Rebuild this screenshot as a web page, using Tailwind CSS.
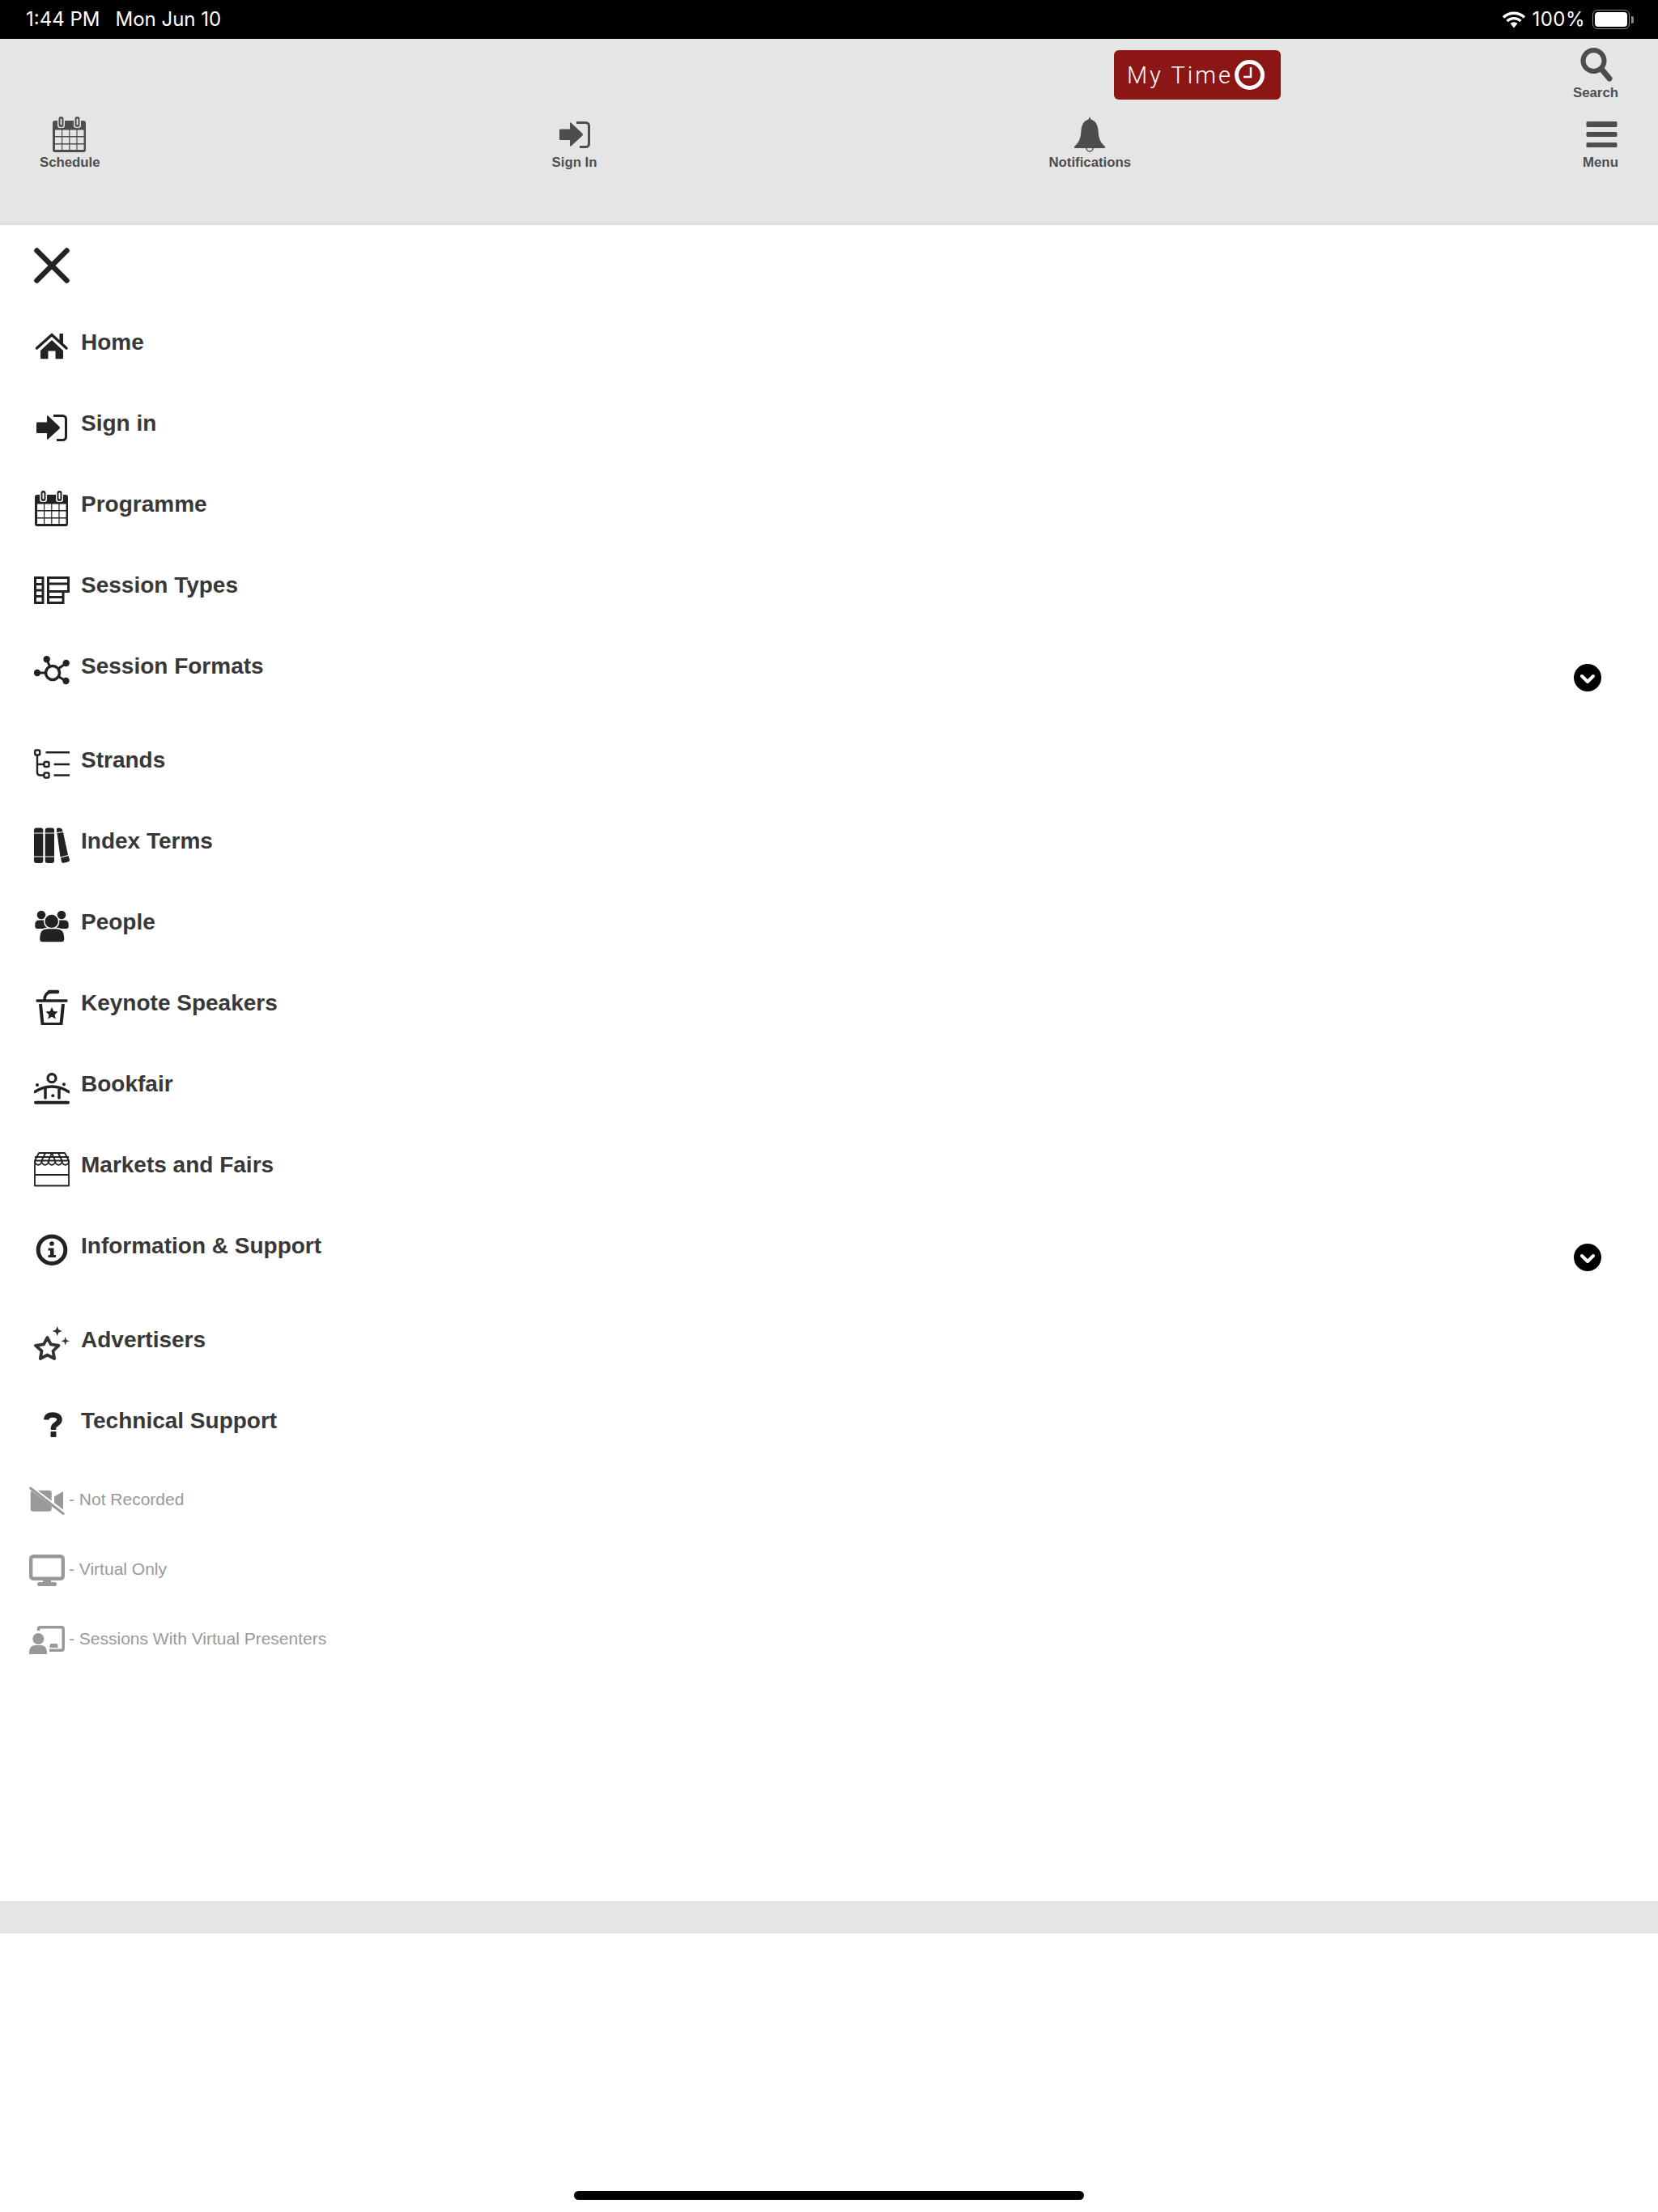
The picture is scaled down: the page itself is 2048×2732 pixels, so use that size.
<!DOCTYPE html>
<html lang="en">
<head>
  <meta charset="UTF-8" />
  <meta name="viewport" content="width=device-width, initial-scale=1" />
  <title>Menu</title>
  <script src="https://cdn.jsdelivr.net/npm/@tailwindcss/browser@4"></script>
</head>
<body class="bg-white font-['Liberation_Sans',Arial,sans-serif]">
  <svg class="hidden">
    <symbol id="i-calendar" viewBox="0 0 44 44">
      <path fill="currentColor" fill-rule="evenodd" d="M4 5h3v6q0 3 3 3h3q3 0 3-3V5h11v6q0 3 3 3h3q3 0 3-3V5h3a3 3 0 0 1 3 3v33a3 3 0 0 1-3 3H4a3 3 0 0 1-3-3V8a3 3 0 0 1 3-3zM4 16.500h8V24H4zM13.200 16.500h8V24h-8zM22.400 16.500h8V24h-8zM31.600 16.500H39.500V24H31.600zM4 25.500h8V33H4zM13.200 25.500h8V33h-8zM22.400 25.500h8V33h-8zM31.600 25.500H39.500V33H31.600zM4 34.500h8V41H4zM13.200 34.500h8V41h-8zM22.400 34.500h8V41h-8zM31.600 34.500H39.500V41H31.600z"/>
      <path fill="currentColor" fill-rule="evenodd" d="M8.500 3a3 3 0 0 1 6 0v7a3 3 0 0 1-6 0zM10.500 3.500v6a1 1 0 0 0 2 0v-6a1 1 0 0 0-2 0zM28.500 3a3 3 0 0 1 6 0v7a3 3 0 0 1-6 0zM30.500 3.500v6a1 1 0 0 0 2 0v-6a1 1 0 0 0-2 0z"/>
    </symbol>
    <symbol id="i-signin" viewBox="0 0 44 44">
      <path fill="currentColor" d="M4 15.500h12V8.300q0-1.500 1.300-.7L31.500 21q1 1.200 0 2.400L17.300 36.500q-1.300.8-1.300-.7V29H4q-1 0-1-1V16.500q0-1 1-1z"/>
      <path fill="none" stroke="currentColor" stroke-width="3" d="M24 7.500h11.500a4 4 0 0 1 4 4v22a4 4 0 0 1-4 4H28"/>
    </symbol>
  </svg>

  <div class="flex flex-col w-[2048px] h-[2732px]">
    <!-- status bar -->
    <div class="flex items-center justify-between h-[48px] bg-black text-white pl-[32px] pr-[30px] font-['Inter',sans-serif] text-[24px]">
      <div class="flex gap-[19px]">
        <span>1:44 PM</span>
        <span>Mon Jun 10</span>
      </div>
      <div class="flex items-center">
        <svg class="w-[30px] h-[22px]" viewBox="0 0 30 22">
          <path fill="none" stroke="white" stroke-width="3.400" d="M2 8.500C9 1.500 21 1.500 28 8.500M6.500 13c5-4.500 12-4.500 17 0"/>
          <path fill="white" d="M10.500 16c3-2.200 6-2.200 9 0L15 21.500z"/>
        </svg>
        <span class="ml-[7px] tracking-[0.500px]">100%</span>
        <div class="flex items-center ml-[9px]">
          <div class="flex items-center w-[46px] h-[24px] p-[2px] rounded-[6px] border border-[#8a8a8a]">
            <div class="w-full h-full bg-white rounded-[4px]"></div>
          </div>
          <div class="w-[3px] h-[9px] ml-[2px] rounded-r-[2px] bg-[#8a8a8a]"></div>
        </div>
      </div>
    </div>

    <!-- header -->
    <header class="h-[230px] bg-[#e5e5e5] border-b-2 border-[#dcdcdc] text-[#4d4d4d] text-[16.800px] leading-[20px] font-bold pl-[49px] pr-[49px]">
      <div class="flex justify-end items-start h-[96px] pt-[11px]">
        <div class="flex items-center w-[206px] h-[61px] mt-[3px] mr-[361px] pl-[16px] bg-[#8c1515] rounded-[6px] text-white font-['Roboto',sans-serif] font-light text-[29px] tracking-[3px]">
          <span>My Time</span>
          <svg class="w-[37px] h-[37px] ml-[2px]" viewBox="0 0 37 37">
            <circle cx="18.500" cy="18.500" r="16" fill="none" stroke="white" stroke-width="5"/>
            <path fill="none" stroke="white" stroke-width="2.500" d="M20 9v12h-9"/>
          </svg>
        </div>
        <div class="flex flex-col items-center gap-[2px]">
          <svg class="w-[44px] h-[44px]" viewBox="0 0 44 44">
            <circle cx="19.500" cy="16" r="13" fill="none" stroke="currentColor" stroke-width="6"/>
            <path stroke="currentColor" stroke-width="7" stroke-linecap="round" d="M29 26l10 12"/>
          </svg>
          <span>Search</span>
        </div>
      </div>
      <nav class="flex justify-between items-start">
        <div class="flex flex-col items-center gap-[3px]">
          <svg class="w-[44px] h-[44px]"><use href="#i-calendar"/></svg>
          <span>Schedule</span>
        </div>
        <div class="flex flex-col items-center gap-[3px]">
          <svg class="w-[44px] h-[44px]"><use href="#i-signin"/></svg>
          <span>Sign In</span>
        </div>
        <div class="flex flex-col items-center gap-[3px]">
          <svg class="w-[44px] h-[44px]" viewBox="0 0 44 44">
            <path fill="currentColor" d="M22 0l1.500 3.500C29 5 32 10 32.500 17c.5 8 1.500 14 8.500 20q1 1.500-1 2H4q-2-.5-1-2c7-6 8-12 8.500-20C12 10 15 5 20.500 3.500z"/>
            <path fill="none" stroke="currentColor" stroke-width="1.500" d="M18 39a4 4 0 0 0 8 0"/>
          </svg>
          <span>Notifications</span>
        </div>
        <div class="flex flex-col items-center gap-[3px]">
          <svg class="w-[44px] h-[44px]" viewBox="0 0 44 44">
            <path fill="currentColor" d="M6 6h35q1.500 0 1.500 1.500v4q0 1.500-1.500 1.500H6q-1.500 0-1.500-1.500v-4Q4.500 6 6 6zM6 19h35q1.500 0 1.500 1.500v3q0 1.500-1.500 1.500H6q-1.500 0-1.500-1.500v-3Q4.500 19 6 19zM6 32h35q1.500 0 1.500 1.500v3q0 1.500-1.500 1.500H6q-1.500 0-1.500-1.500v-3Q4.500 32 6 32z"/>
          </svg>
          <span>Menu</span>
        </div>
      </nav>
    </header>

    <!-- menu -->
    <main class="flex-1 pt-[28px] pl-[42px]">
      <svg class="w-[44px] h-[44px] mb-[56px] text-[#222222]" viewBox="0 0 44 44">
        <path stroke="currentColor" stroke-width="6.500" stroke-linecap="round" d="M3.500 3.500l37 37M40.500 3.500l-37 37"/>
      </svg>

      <ul class="text-[28px] leading-[34px] font-bold text-[#383838]">
        <li class="flex h-[100px] gap-[14px]">
          <svg class="w-[44px] h-[44px] text-[#222222]" viewBox="0 0 44 44">
            <path fill="currentColor" d="M8 27L22 14 36 27v9q0 1.300-1.300 1.300H26.500V27.500h-9v9.800H9.300Q8 37.300 8 36z"/>
            <path fill="none" stroke="currentColor" stroke-width="3.500" stroke-linecap="round" d="M3.500 24L22 7.500 40 24"/>
            <path fill="currentColor" d="M31.500 6h4.500v13l-4.500-4z"/>
          </svg>
          <span>Home</span>
        </li>
        <li class="flex h-[100px] gap-[14px]">
          <svg class="w-[44px] h-[44px] text-[#222222]"><use href="#i-signin"/></svg>
          <span>Sign in</span>
        </li>
        <li class="flex h-[100px] gap-[14px]">
          <svg class="w-[44px] h-[44px] text-[#222222]"><use href="#i-calendar"/></svg>
          <span>Programme</span>
        </li>
        <li class="flex h-[100px] gap-[14px]">
          <svg class="w-[44px] h-[44px] text-[#222222]" viewBox="0 0 44 44">
            <path fill="none" stroke="currentColor" stroke-width="3" d="M1.500 7.500h9.500v31H1.500zM1.500 15.500h9.500M1.500 23h9.500M1.500 30.500h9.500M17.500 38.500v-31h25v17h-6.500v14zM17.500 15h25M17.500 24.500h18.500M17.500 31.500h18.500"/>
          </svg>
          <span>Session Types</span>
        </li>
        <li class="flex h-[116px] gap-[14px]">
          <svg class="w-[44px] h-[44px] text-[#222222]" viewBox="0 0 44 44">
            <path stroke="currentColor" stroke-width="3" d="M15.700 8.300L23 25M39.700 13L23 25M4 25h19M39 35L23 25"/>
            <circle cx="23" cy="25" r="8.500" fill="white" stroke="currentColor" stroke-width="3.500"/>
            <circle cx="15.700" cy="8.300" r="4.200" fill="currentColor"/>
            <circle cx="39.700" cy="13" r="4.200" fill="currentColor"/>
            <circle cx="4" cy="25" r="4.200" fill="currentColor"/>
            <circle cx="39.500" cy="35" r="4.200" fill="currentColor"/>
          </svg>
          <span>Session Formats</span>
          <svg class="w-[34px] h-[34px] ml-auto mr-[70px] mt-[14px]" viewBox="0 0 34 34">
            <circle cx="17" cy="17" r="17" fill="black"/>
            <path fill="none" stroke="white" stroke-width="4" stroke-linecap="round" stroke-linejoin="round" d="M10 15l7 7 7-7"/>
          </svg>
        </li>
        <li class="flex h-[100px] gap-[14px]">
          <svg class="w-[44px] h-[44px] text-[#222222]" viewBox="0 0 44 44">
            <g fill="none" stroke="currentColor" stroke-width="2.400">
              <rect x="1.200" y="4.500" width="6" height="6" rx="1.500"/>
              <rect x="12.500" y="19" width="6" height="6" rx="1.500"/>
              <rect x="12.500" y="32.500" width="6" height="6" rx="1.500"/>
              <path d="M4 10.500V32q0 3.500 3.500 3.500h5M4 22h8.500M14.500 7.300H44M24.500 22H44M24.500 35.500H44"/>
            </g>
          </svg>
          <span>Strands</span>
        </li>
        <li class="flex h-[100px] gap-[14px]">
          <svg class="w-[44px] h-[44px] text-[#222222]" viewBox="0 0 44 44">
            <path fill="currentColor" d="M3 .500h5.300q3 0 3 3v3H0v-3q0-3 3-3zM0 7.500h11.300v28H0zM0 36.500h11.300V41q0 3-3 3H3q-3 0-3-3zM16.700.500H22q3 0 3 3v3H13.700v-3q0-3 3-3zM13.700 7.500H25v28H13.700zM13.700 36.500H25V41q0 3-3 3h-5.300q-3 0-3-3z"/>
            <path fill="currentColor" d="M28 2q0-2 3-1.500l2 .5q2 .5 2 2l.5 2-7.500 1zM28.500 7l7.500-1 6 28-9.500 2.500zM33 37.500l9.500-2.500 1.500 5q.3 2-2 2.500l-5 1.200q-2.500.5-3-1.500z"/>
          </svg>
          <span>Index Terms</span>
        </li>
        <li class="flex h-[100px] gap-[14px]">
          <svg class="w-[44px] h-[44px] text-[#222222]" viewBox="0 0 44 44">
            <circle cx="9" cy="8" r="5.300" fill="currentColor"/>
            <circle cx="34" cy="8" r="5.300" fill="currentColor"/>
            <path fill="currentColor" d="M1.300 20q0-5.500 5-5.500h5q4.700 0 4.700 5V25H4q-2.700 0-2.700-3zM27 14.500h10.700q5 0 5 5.500v2q0 3-2.700 3H27z"/>
            <circle cx="21.700" cy="16" r="9" fill="currentColor" stroke="white" stroke-width="1.500"/>
            <path fill="currentColor" stroke="white" stroke-width="1.500" d="M6.500 36q0-11.500 10-11.500h11q10.500 0 10.500 11.500v2q0 4-4 4H10.500q-4 0-4-4z"/>
          </svg>
          <span>People</span>
        </li>
        <li class="flex h-[100px] gap-[14px]">
          <svg class="w-[44px] h-[44px] text-[#222222]" viewBox="0 0 44 44">
            <path fill="none" stroke="currentColor" stroke-width="3.500" stroke-linecap="round" d="M4 14h36M13 13Q13 5 20 3"/>
            <path fill="none" stroke="currentColor" stroke-width="4.500" stroke-linecap="round" d="M19 3h10"/>
            <path fill="none" stroke="currentColor" stroke-width="4" stroke-linejoin="round" d="M8 18l2.500 25h23l2.500-25"/>
            <path fill="currentColor" d="M22 22l2.300 5 5.300.6-4 3.600 1.100 5.300-4.700-2.700-4.700 2.700 1.100-5.300-4-3.600 5.300-.6z"/>
          </svg>
          <span>Keynote Speakers</span>
        </li>
        <li class="flex h-[100px] gap-[14px]">
          <svg class="w-[44px] h-[44px] text-[#222222]" viewBox="0 0 44 44">
            <circle cx="22" cy="9.700" r="5" fill="none" stroke="currentColor" stroke-width="3.200"/>
            <path fill="none" stroke="currentColor" stroke-width="3.500" stroke-linecap="round" d="M1 26.500Q11 20 22 20t21 6.500M14 21v13M31 21v13"/>
            <path stroke="currentColor" stroke-width="4" stroke-linecap="round" d="M2 39.700h40"/>
            <circle cx="4" cy="18" r="2" fill="currentColor"/>
            <circle cx="37" cy="17.300" r="2" fill="currentColor"/>
            <circle cx="23.300" cy="31.300" r="2" fill="currentColor"/>
          </svg>
          <span>Bookfair</span>
        </li>
        <li class="flex h-[100px] gap-[14px]">
          <svg class="w-[44px] h-[44px] text-[#222222]" viewBox="0 0 44 44">
            <path fill="none" stroke="currentColor" stroke-width="1.800" stroke-linejoin="round" d="M6 2h32l5 9.500V42.500H1V11.500zM1 29h42M1 11.500h42M1 11.500c0 7 8.400 7 8.400 0 0 7 8.400 7 8.400 0 0 7 8.400 7 8.400 0 0 7 8.400 7 8.400 0 0 7 8.400 7 8.400 0M14 2l-4.600 9.500M22 2l-4.200 9.500M22 2l4.200 9.500M30 2l4.600 9.500M1 7h42"/>
          </svg>
          <span>Markets and Fairs</span>
        </li>
        <li class="flex h-[116px] gap-[14px]">
          <svg class="w-[44px] h-[44px] text-[#222222]" viewBox="0 0 44 44">
            <circle cx="22" cy="21.700" r="16.800" fill="none" stroke="currentColor" stroke-width="5"/>
            <circle cx="22" cy="14" r="2.800" fill="currentColor"/>
            <path fill="currentColor" d="M17.500 19.500H24.500V28h2.500v3H17.500v-3h2.500v-5.500h-2.500z"/>
          </svg>
          <span>Information &amp; Support</span>
          <svg class="w-[34px] h-[34px] ml-auto mr-[70px] mt-[14px]" viewBox="0 0 34 34">
            <circle cx="17" cy="17" r="17" fill="black"/>
            <path fill="none" stroke="white" stroke-width="4" stroke-linecap="round" stroke-linejoin="round" d="M10 15l7 7 7-7"/>
          </svg>
        </li>
        <li class="flex h-[100px] gap-[14px]">
          <svg class="w-[44px] h-[44px] text-[#333333]" viewBox="0 0 44 44">
            <path fill="none" stroke="currentColor" stroke-width="3.800" stroke-linejoin="round" d="M16.500 14l4.300 8.400 9.700 1.400-7 6.700 1.700 9.500-8.700-4.500L7.800 40l1.700-9.500-7.500-6.700 10-1.400z"/>
            <path fill="currentColor" d="M28.700 0l1.700 4.300 4.300 1.700-4.300 1.700-1.700 4.300L27 7.700 22.700 6 27 4.300zM38.700 13l1.300 4 4 1.300-4 1.300-1.300 4-1.300-4-4-1.300 4-1.300z"/>
          </svg>
          <span>Advertisers</span>
        </li>
        <li class="flex h-[92px] gap-[14px]">
          <svg class="w-[44px] h-[44px] text-[#222222]" viewBox="0 0 44 44">
            <path fill="none" stroke="currentColor" stroke-width="6.500" d="M15 15.500C15.500 11 18.500 9.500 23 9.500c5 0 8.500 2 8.500 6 0 5-7.500 5.500-7.500 10V28"/>
            <rect x="20.500" y="30" width="7" height="7" rx="1" fill="currentColor"/>
          </svg>
          <span>Technical Support</span>
        </li>
      </ul>

      <!-- legend -->
      <ul class="-ml-[6px] text-[21px] leading-[44px] text-[#999999]">
        <li class="flex h-[86px] gap-[5px]">
          <svg class="w-[44px] h-[44px]" viewBox="0 0 44 44">
            <path fill="currentColor" d="M4.700 10.700h20q3 0 3 3v20q0 3-3 3h-20q-3 0-3-3v-20q0-3 3-3zM31 18.500l11-6.500v25l-11-7z"/>
            <path stroke="white" stroke-width="5" d="M-1 5l46 35"/>
            <path stroke="currentColor" stroke-width="3" stroke-linecap="round" d="M1.700 8l40.500 31.500"/>
          </svg>
          <span>- Not Recorded</span>
        </li>
        <li class="flex h-[86px] gap-[5px]">
          <svg class="w-[44px] h-[44px]" viewBox="0 0 44 44">
            <rect x="2.200" y="6.200" width="39.600" height="27.500" rx="3" fill="none" stroke="currentColor" stroke-width="4.400"/>
            <path fill="currentColor" d="M17 35h10v3h-10zM12 38h20q2 0 2 2.500T32 43H12q-2 0-2-2.500T12 38z"/>
          </svg>
          <span>- Virtual Only</span>
        </li>
        <li class="flex h-[86px] gap-[5px]">
          <svg class="w-[44px] h-[44px]" viewBox="0 0 44 44">
            <path fill="none" stroke="currentColor" stroke-width="3.500" d="M11.500 12V10q0-2.200 2.200-2.200H40q2.200 0 2.200 2.200v24q0 2.200-2.200 2.200H25"/>
            <path fill="currentColor" d="M25.500 33v-3q0-2 2-2h6q2 0 2 2v3z"/>
            <circle cx="11.300" cy="22" r="7" fill="currentColor"/>
            <path fill="currentColor" d="M0 39q0-9 8-9h6q8 0 8 9v2H0z"/>
          </svg>
          <span>- Sessions With Virtual Presenters</span>
        </li>
      </ul>
    </main>

    <!-- footer band -->
    <div class="h-[40px] bg-[#e5e5e5]"></div>

    <!-- home indicator area -->
    <div class="flex justify-center items-end h-[344px] pb-[15px]">
      <div class="w-[630px] h-[11px] bg-black rounded-full"></div>
    </div>
  </div>
</body>
</html>
